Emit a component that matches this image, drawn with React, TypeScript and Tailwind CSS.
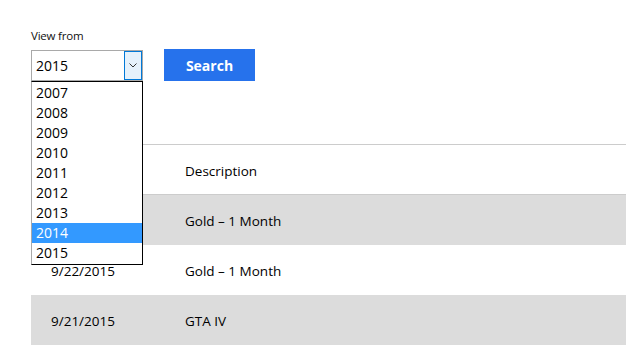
import { useState } from "react";

const years = ["2007", "2008", "2009", "2010", "2011", "2012", "2013", "2014", "2015"];

const rows = [
  { date: "9/23/2015", desc: "Gold – 1 Month" },
  { date: "9/22/2015", desc: "Gold – 1 Month" },
  { date: "9/21/2015", desc: "GTA IV" },
];

export default function App() {
  const [year] = useState("2015");
  const highlighted = "2014";

  return (
    <div className="w-[626px] h-[347px] overflow-hidden bg-white text-black font-['Open_Sans','Noto_Sans',sans-serif]">
      <div className="pl-[31px] pt-[28px]">
        <div className="text-[11.5px] leading-[15px] tracking-[-0.2px] text-[#111]">View from</div>

        {/* filter bar */}
        <div className="mt-[6px] flex items-center gap-[21px]">
          <div className="relative">
            <div className="w-[112px] h-[31px] border border-[#a9a9a9] flex items-center justify-between bg-white">
              <span className="pl-[4px] text-[14px]">{year}</span>
              <div className="w-[18px] h-[29px] border border-[#0078d7] bg-[#e5f1fb] flex items-center justify-center">
                <svg width="8" height="5" viewBox="0 0 8 5" fill="none">
                  <path d="M0.5 0.5 L4 4 L7.5 0.5" stroke="#333" strokeWidth="1" />
                </svg>
              </div>
            </div>

            {/* open dropdown list */}
            <div className="absolute left-0 top-[31px] z-10 w-[112px] bg-white border border-black border-l-[#a9a9a9] py-[1px]">
              {years.map((y) => (
                <div
                  key={y}
                  className={`h-[20px] pl-[4px] text-[14px] leading-[20px] ${
                    y === highlighted ? "bg-[#3399ff] text-white" : "text-black"
                  }`}
                >
                  {y}
                </div>
              ))}
            </div>
          </div>

          <button className="w-[91px] h-[32px] bg-[#2672ec] text-white text-[14px] font-bold">
            Search
          </button>
        </div>

        {/* transactions table */}
        <div className="mt-[63px] border-t border-[#cccccc] text-[13.5px]">
          <div className="h-[50px] pt-[3px] flex items-center border-b border-[#cccccc]">
            <div className="w-[154px] pl-[20px]">Date</div>
            <div>Description</div>
          </div>
          {rows.map((r, i) => (
            <div
              key={i}
              className={`h-[50px] pt-[3px] flex items-center ${i % 2 === 0 ? "bg-[#dcdcdc]" : "bg-white"}`}
            >
              <div className="w-[154px] pl-[20px]">{r.date}</div>
              <div>{r.desc}</div>
            </div>
          ))}
        </div>
      </div>
    </div>
  );
}
